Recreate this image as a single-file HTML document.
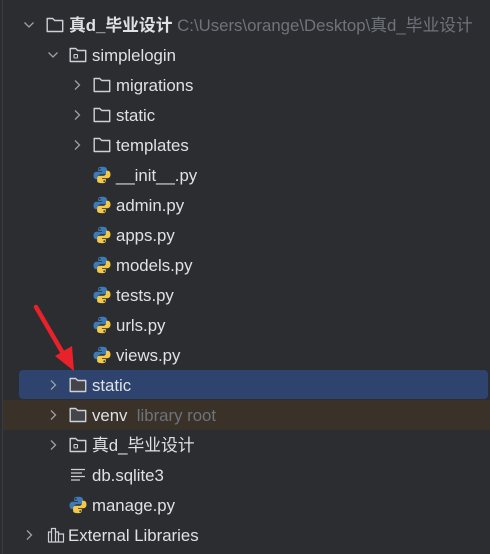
<!DOCTYPE html>
<html><head><meta charset="utf-8"><style>
body{margin:0;width:490px;height:554px;background:#2b2d30;position:relative;overflow:hidden;font-family:"Liberation Sans","Noto Sans CJK SC",sans-serif;font-size:16.8px;color:#dfe1e5}
.r{position:absolute;left:0;height:30px;width:490px}
.t{position:absolute;top:7px;white-space:nowrap;line-height:18px}
svg.i{position:absolute;top:6px;width:18px;height:18px}
svg.c{position:absolute;top:9px;width:10px;height:12px}
.g{color:#6f737a}
</style></head><body>
<svg width="0" height="0" style="position:absolute">
<defs>
<symbol id="fold" viewBox="0 0 18 18"><path d="M1.2 2.5h5.5l2 2h8v11H1.2z" fill="none" stroke="#ced0d6" stroke-width="1.4" stroke-linejoin="round"/></symbol>
<symbol id="foldf" viewBox="0 0 18 18"><path d="M1.2 2.5h5.5l2 2h8v11H1.2z" fill="#43454a" stroke="#ced0d6" stroke-width="1.4" stroke-linejoin="round"/></symbol>
<symbol id="pkg" viewBox="0 0 18 18"><path d="M1.2 2.5h5.5l2 2h8v11H1.2z" fill="none" stroke="#ced0d6" stroke-width="1.4" stroke-linejoin="round"/><rect x="5" y="8.5" width="3.5" height="3.5" rx=".6" fill="none" stroke="#ced0d6" stroke-width="1.1"/></symbol>
<symbol id="py" viewBox="0 0 18 18"><path d="M8.8 0.8c-3.6 0-3.6 1.5-3.6 2.4V5h3.8v.8H3.6C1.8 5.8.5 7.1.5 9.5c0 2.5 1.3 3.7 2.9 3.7h1.6V11c0-1.6 1.3-2.8 2.9-2.8h3.6c1.3 0 2.4-1.1 2.4-2.4V3.2c0-1.3-1.1-2.4-5.1-2.4z" fill="#3d7ab8"/><circle cx="6.8" cy="2.9" r=".9" fill="#2b2d30"/><path d="M9.2 17.2c3.6 0 3.6-1.5 3.6-2.4V13H9v-.8h5.4c1.8 0 3.1-1.3 3.1-3.7 0-2.5-1.3-3.7-2.9-3.7H13V7c0 1.6-1.3 2.8-2.9 2.8H6.5c-1.3 0-2.4 1.1-2.4 2.4v2.6c0 1.3 1.1 2.4 5.1 2.4z" fill="#f2c94a"/><circle cx="11.2" cy="15.1" r=".9" fill="#2b2d30"/></symbol>
<symbol id="cr" viewBox="0 0 10 12"><path d="M3 1.5l4.5 4.5-4.5 4.5" fill="none" stroke="#9da0a8" stroke-width="1.3"/></symbol>
<symbol id="cd" viewBox="0 0 10 12"><path d="M0.5 3.5l4.5 4.5 4.5-4.5" fill="none" stroke="#9da0a8" stroke-width="1.3"/></symbol>
</defs></svg>
<div style="position:absolute;left:2px;top:0;width:1px;height:554px;background:#393b40"></div>
<div style="position:absolute;left:19px;top:370px;width:469px;height:29px;background:#2e436e;border-radius:4px"></div>
<div style="position:absolute;left:3px;top:400px;width:487px;height:30px;background:#3a3128"></div>

<div class="r" style="top:10px"><svg class="c" style="left:24px"><use href="#cd"/></svg><svg class="i" style="left:46px"><use href="#fold"/></svg><span class="t" style="left:69px"><b>真d_毕业设计</b> <span class="g">C:\Users\orange\Desktop\真d_毕业设计</span></span></div>
<div class="r" style="top:40px"><svg class="c" style="left:48px"><use href="#cd"/></svg><svg class="i" style="left:69px"><use href="#pkg"/></svg><span class="t" style="left:92px">simplelogin</span></div>
<div class="r" style="top:70px"><svg class="c" style="left:72px"><use href="#cr"/></svg><svg class="i" style="left:93px"><use href="#fold"/></svg><span class="t" style="left:116px">migrations</span></div>
<div class="r" style="top:100px"><svg class="c" style="left:72px"><use href="#cr"/></svg><svg class="i" style="left:93px"><use href="#fold"/></svg><span class="t" style="left:116px">static</span></div>
<div class="r" style="top:130px"><svg class="c" style="left:72px"><use href="#cr"/></svg><svg class="i" style="left:93px"><use href="#fold"/></svg><span class="t" style="left:116px">templates</span></div>
<div class="r" style="top:160px"><svg class="i" style="left:93px"><use href="#py"/></svg><span class="t" style="left:116px">__init__.py</span></div>
<div class="r" style="top:190px"><svg class="i" style="left:93px"><use href="#py"/></svg><span class="t" style="left:116px">admin.py</span></div>
<div class="r" style="top:220px"><svg class="i" style="left:93px"><use href="#py"/></svg><span class="t" style="left:116px">apps.py</span></div>
<div class="r" style="top:250px"><svg class="i" style="left:93px"><use href="#py"/></svg><span class="t" style="left:116px">models.py</span></div>
<div class="r" style="top:280px"><svg class="i" style="left:93px"><use href="#py"/></svg><span class="t" style="left:116px">tests.py</span></div>
<div class="r" style="top:310px"><svg class="i" style="left:93px"><use href="#py"/></svg><span class="t" style="left:116px">urls.py</span></div>
<div class="r" style="top:340px"><svg class="i" style="left:93px"><use href="#py"/></svg><span class="t" style="left:116px">views.py</span></div>
<div class="r" style="top:370px"><svg class="c" style="left:48px"><use href="#cr"/></svg><svg class="i" style="left:69px"><use href="#foldf"/></svg><span class="t" style="left:92px">static</span></div>
<div class="r" style="top:400px"><svg class="c" style="left:48px"><use href="#cr"/></svg><svg class="i" style="left:69px"><use href="#foldf"/></svg><span class="t" style="left:92px">venv <span class="g">&nbsp;library root</span></span></div>
<div class="r" style="top:430px"><svg class="c" style="left:48px"><use href="#cr"/></svg><svg class="i" style="left:69px"><use href="#pkg"/></svg><span class="t" style="left:92px">真d_毕业设计</span></div>
<div class="r" style="top:460px"><svg class="i" style="left:69px" viewBox="0 0 18 18"><path d="M2 3.5h14M2 7h11M2 10.5h14M2 14h9" stroke="#ced0d6" stroke-width="1.3"/></svg><span class="t" style="left:92px">db.sqlite3</span></div>
<div class="r" style="top:490px"><svg class="i" style="left:69px"><use href="#py"/></svg><span class="t" style="left:92px">manage.py</span></div>
<div class="r" style="top:520px"><svg class="c" style="left:24px"><use href="#cr"/></svg><svg class="i" style="left:47px" viewBox="0 0 18 18"><path d="M1 16h16M1.5 15.5V6h3v9.5M4.5 15.5V2.5h4v13M8.5 15.5V6h3v9.5M11.5 15.5V8h5v7.5" fill="none" stroke="#ced0d6" stroke-width="1.2"/></svg><span class="t" style="left:68px">External Libraries</span></div>

<svg style="position:absolute;left:0;top:0" width="490" height="554"><line x1="36" y1="307" x2="64" y2="355" stroke="#e8212a" stroke-width="4.5" stroke-linecap="round"/><polygon points="74,371 55,356 72,346" fill="#e8212a"/></svg>
</body></html>
